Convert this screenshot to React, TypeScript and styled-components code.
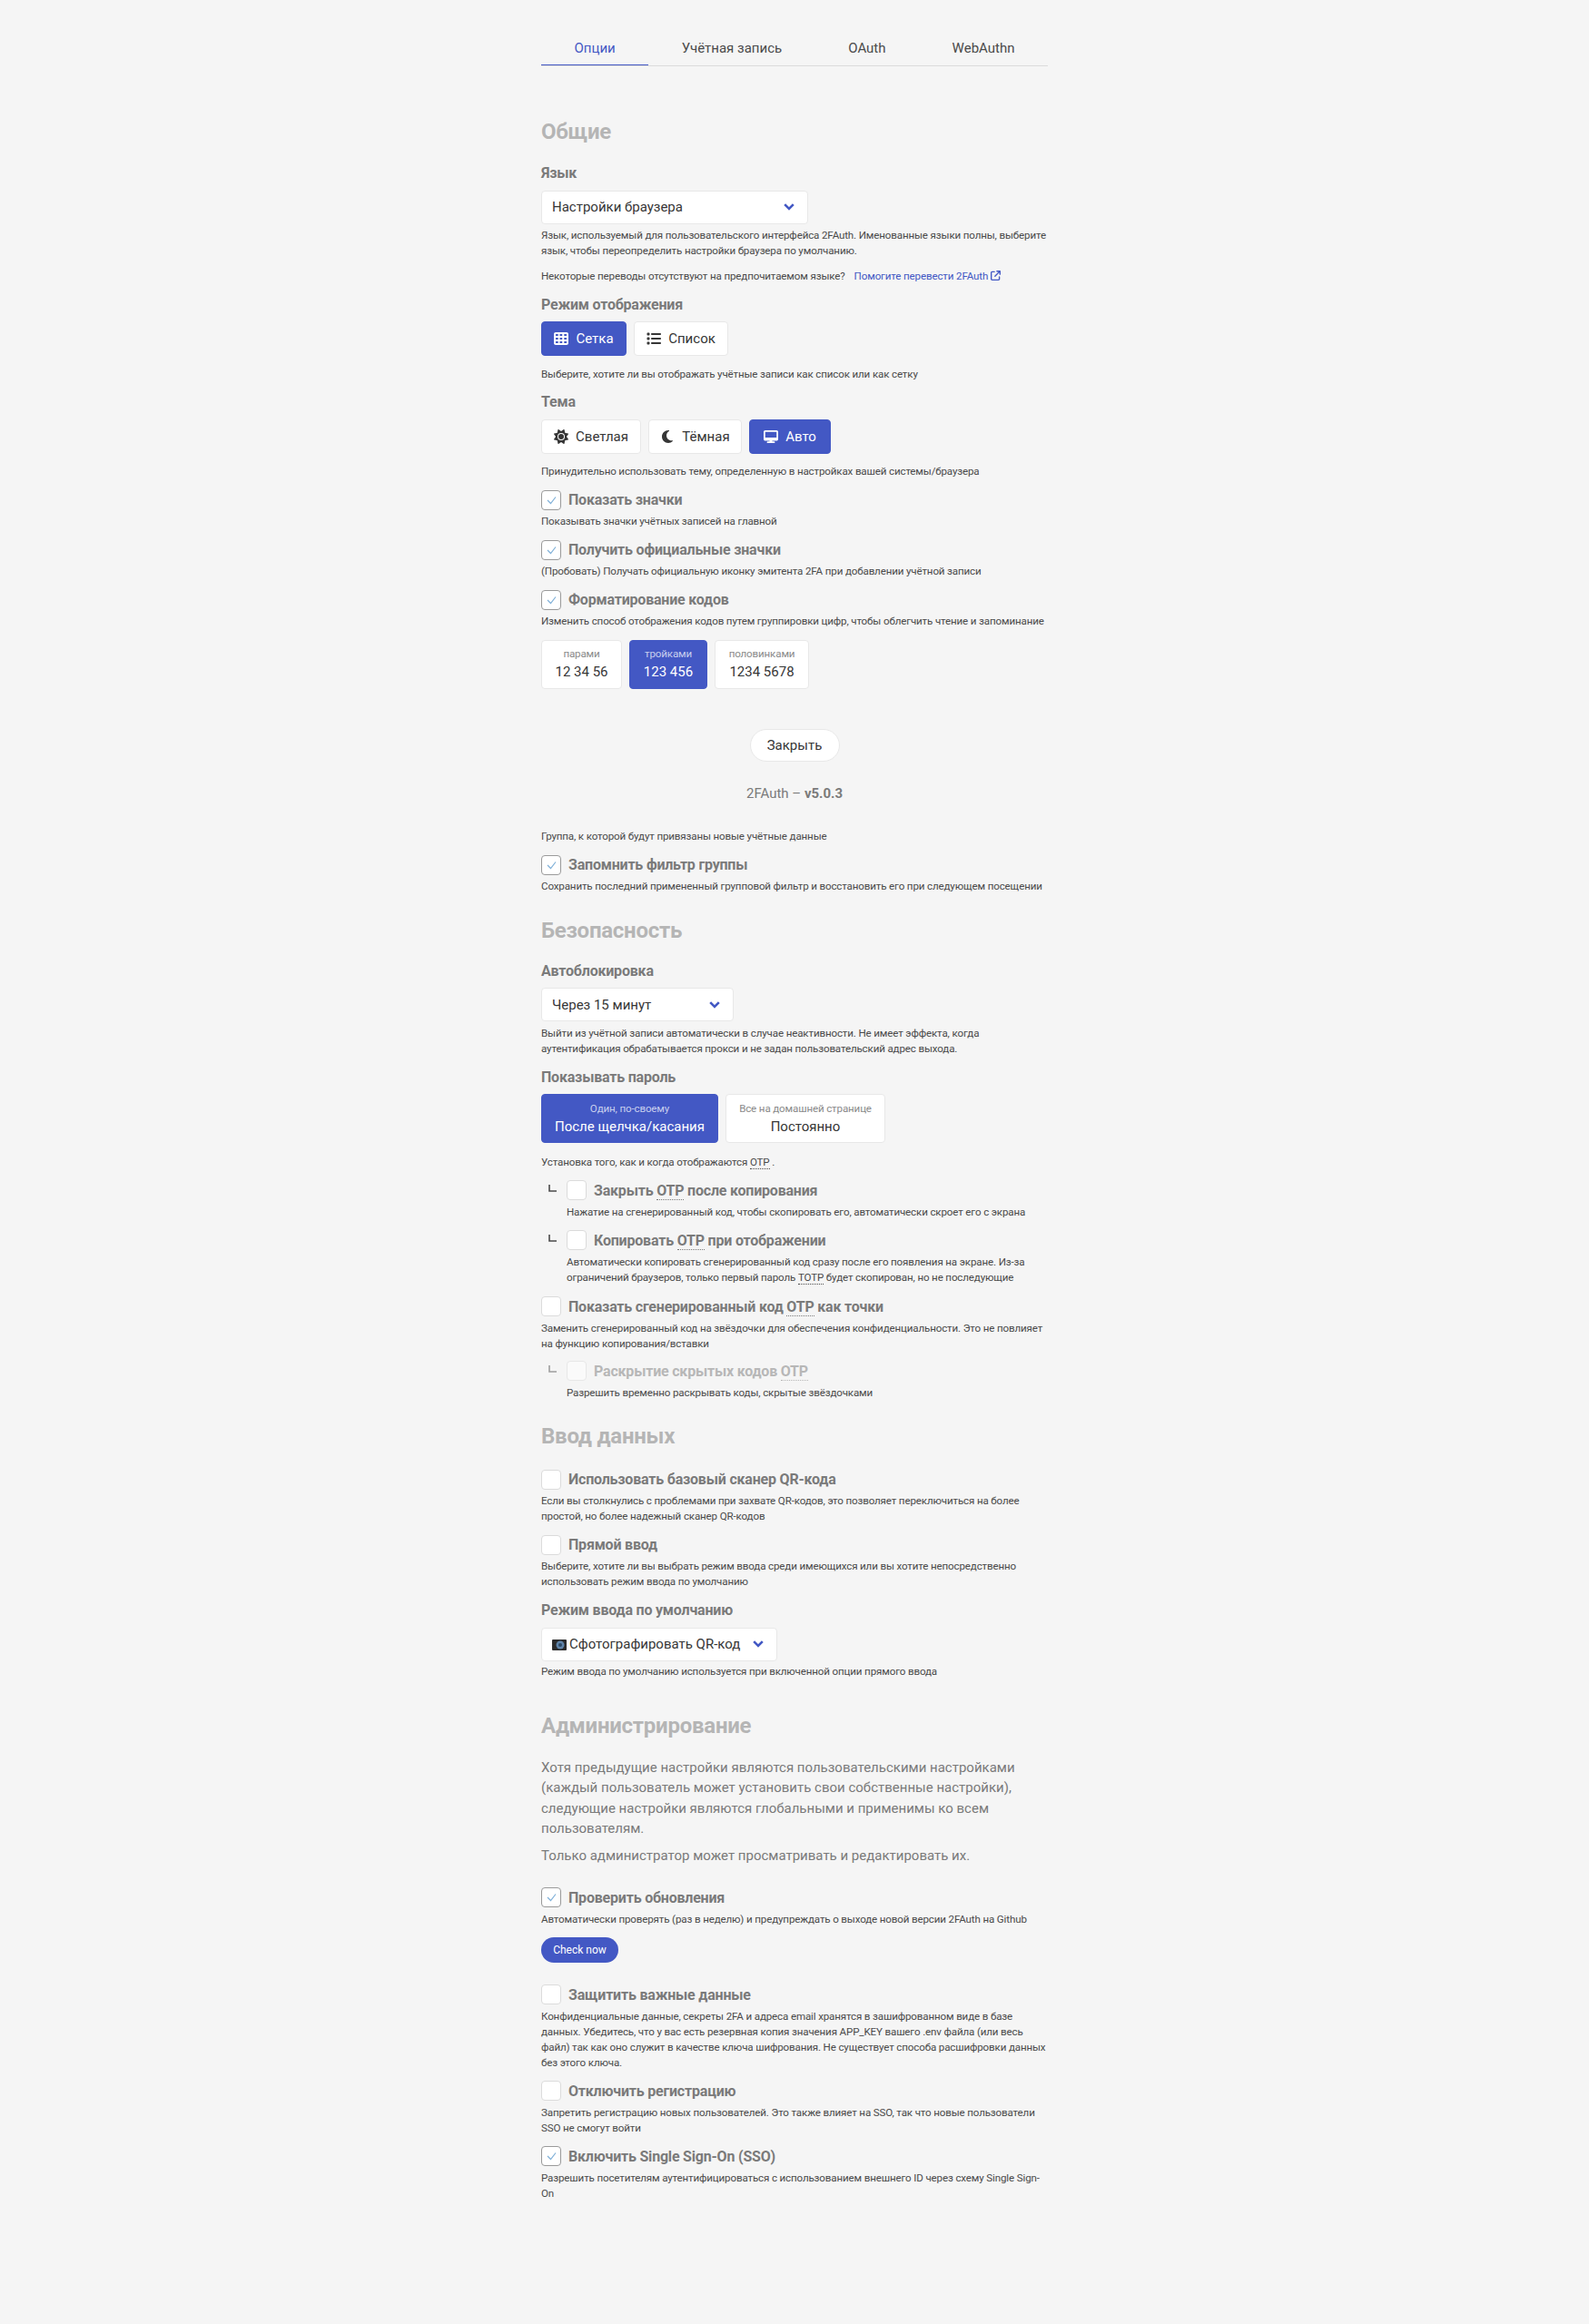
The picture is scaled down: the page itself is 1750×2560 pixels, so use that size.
import React from 'react'
import styled, { createGlobalStyle } from 'styled-components'
import { FaTableCells, FaList, FaSun, FaMoon, FaDesktop, FaArrowUpRightFromSquare } from 'react-icons/fa6'

const primary = '#4358c4'
const GlobalStyle = createGlobalStyle`
  html, body { margin: 0; background: #f5f5f5; }
  body { font-family: Roboto, sans-serif; color: #4a4a4a; }
`

const Page = styled.div`
  width: 558px;
  min-height: 2560px;
  margin: 0 auto;
  padding-top: 42px;
  box-sizing: border-box;
`

const Tabs = styled.div`
  display: flex;
  border-bottom: 1px solid #dbdbdb;
  height: 30px;
`

const Tab = styled.div<{ $active?: boolean }>`
  flex: 1 1 auto;
  text-align: center;
  font-size: 15px;
  line-height: 22px;
  color: ${(p) => (p.$active ? primary : '#4a4a4a')};
  height: 30px;
  box-sizing: border-box;
  border-bottom: ${(p) => (p.$active ? `1px solid ${primary}` : 'none')};
`

const SectionTitle = styled.h4<{ $mt?: number }>`
  margin: ${(p) => p.$mt ?? 24.5}px 0 0;
  font-size: 24px;
  line-height: 30px;
  font-weight: 700;
  letter-spacing: -0.25px;
  color: #b5b5b5;
`

const Field = styled.div<{ $mt?: number }>`
  margin-top: ${(p) => p.$mt ?? 11.5}px;
`

const Label = styled.div`
  font-size: 16px;
  line-height: 22px;
  font-weight: 700;
  letter-spacing: -0.2px;
  color: #7a7a7a;
  margin-bottom: 7.5px;
`

const Help = styled.p<{ $mt?: number; $indent?: boolean }>`
  margin: ${(p) => p.$mt ?? 4.5}px 0 0 ${(p) => (p.$indent ? 28 : 0)}px;
  font-size: 11.6px;
  letter-spacing: -0.15px;
  line-height: 17px;
  color: #4a4a4a;
`

const HelpLink = styled.span`
  color: ${primary};
  margin-left: 10px;
  svg { width: 11px; height: 11px; margin-left: 3px; vertical-align: -1px; }
`

const Abbr = styled.span`
  border-bottom: 1px dotted currentColor;
`

const SelectBox = styled.div<{ $w: number }>`
  width: ${(p) => p.$w}px;
  height: 37px;
  box-sizing: border-box;
  display: flex;
  align-items: center;
  justify-content: space-between;
  padding: 0 14px 0 11px;
  background: #fff;
  border: 1px solid #e8e8e8;
  border-radius: 4px;
  font-size: 15px;
  color: #363636;
`

const SelectValue = styled.span`
  display: flex;
  align-items: center;
  gap: 3px;
`

const ButtonRow = styled.div`
  display: flex;
  gap: 8px;
`

const ToggleButton = styled.div<{ $active?: boolean; $w: number; $h?: number }>`
  width: ${(p) => p.$w}px;
  height: ${(p) => p.$h ?? 38}px;
  box-sizing: border-box;
  display: flex;
  flex-direction: column;
  align-items: center;
  justify-content: center;
  background: ${(p) => (p.$active ? primary : '#fff')};
  border: 1px solid ${(p) => (p.$active ? primary : '#e8e8e8')};
  border-radius: 4px;
  color: ${(p) => (p.$active ? '#fff' : '#363636')};
`

const IconLine = styled.span`
  display: flex;
  align-items: center;
  gap: 8px;
  font-size: 15px;
  line-height: 22px;
  svg { width: 16px; height: 16px; }
`

const SmallCaption = styled.span<{ $active?: boolean }>`
  font-size: 11.6px;
  letter-spacing: -0.15px;
  line-height: 17px;
  color: ${(p) => (p.$active ? '#c8cfee' : '#8a8a8a')};
`

const Value = styled.span`
  font-size: 15px;
  line-height: 22px;
`

const CheckRow = styled.div<{ $mt?: number; $indent?: boolean; $disabled?: boolean }>`
  display: flex;
  align-items: center;
  margin-top: ${(p) => p.$mt ?? 11.5}px;
  height: 22px;
  position: relative;
  padding-left: ${(p) => (p.$indent ? 28 : 0)}px;
  opacity: ${(p) => (p.$disabled ? 0.5 : 1)};
`

const Box = styled.span<{ $checked?: boolean }>`
  width: 22px;
  height: 22px;
  box-sizing: border-box;
  flex: none;
  display: flex;
  align-items: center;
  justify-content: center;
  background: #fff;
  border: 1px solid ${(p) => (p.$checked ? '#9a9a9a' : '#dbdbdb')};
  border-radius: 4px;
  svg { width: 11px; height: 10px; }
`

const CheckLabel = styled.span`
  margin-left: 8px;
  font-size: 16px;
  font-weight: 700;
  letter-spacing: -0.2px;
  color: #7a7a7a;
`

const TreeMark = styled.svg`
  position: absolute;
  left: 8px;
  top: 5px;
  width: 9px;
  height: 8px;
`

const CloseRow = styled.div`
  display: flex;
  justify-content: center;
  margin-top: 44px;
`

const CloseButton = styled.div`
  width: 99px;
  height: 36px;
  box-sizing: border-box;
  display: flex;
  align-items: center;
  justify-content: center;
  background: #fff;
  border: 1px solid #e8e8e8;
  border-radius: 18px;
  font-size: 15px;
  color: #363636;
`

const Version = styled.div`
  margin-top: 24px;
  text-align: center;
  font-size: 15px;
  line-height: 22px;
  color: #7a7a7a;
  b { font-weight: 700; }
`

const Para = styled.p<{ $mt?: number }>`
  margin: ${(p) => p.$mt ?? 20}px 0 0;
  font-size: 15px;
  line-height: 22.5px;
  color: #7a7a7a;
`

const SmallPill = styled.div`
  margin-top: 11.5px;
  width: 85px;
  height: 28px;
  display: flex;
  align-items: center;
  justify-content: center;
  background: ${primary};
  border-radius: 14px;
  color: #fff;
  font-size: 12px;
`

const Chevron = () => (
  <svg width="12" height="8" viewBox="0 0 12 8">
    <path d="M1.2 1.2 L6 6 L10.8 1.2" fill="none" stroke={primary} strokeWidth="2.6" />
  </svg>
)

const CameraIcon = () => (
  <svg width="16" height="13" viewBox="0 0 16 13">
    <rect x="0" y="1" width="16" height="12" rx="1" fill="#2b2b2b" />
    <circle cx="9" cy="7" r="4.5" fill="#5f83a8" />
    <circle cx="9" cy="7" r="2" fill="#2e4a66" />
  </svg>
)

const CheckItem = ({ checked, indent, disabled, mt, children }: {
  checked?: boolean
  indent?: boolean
  disabled?: boolean
  mt?: number
  children: React.ReactNode
}) => (
  <CheckRow $indent={indent} $disabled={disabled} $mt={mt}>
    {indent && (
      <TreeMark viewBox="0 0 9 8">
        <path d="M1 0 V7 H9" fill="none" stroke="#4a4a4a" strokeWidth="1.6" />
      </TreeMark>
    )}
    <Box $checked={checked}>
      {checked && (
        <svg viewBox="0 0 11 10">
          <path d="M1 5 L4.5 8.5 L10 1.5" fill="none" stroke="#7fb0d8" strokeWidth="1.2" />
        </svg>
      )}
    </Box>
    <CheckLabel>{children}</CheckLabel>
  </CheckRow>
)

export default function App() {
  return (
    <Page>
      <GlobalStyle />
      <Tabs>
        <Tab $active>Опции</Tab>
        <Tab>Учётная запись</Tab>
        <Tab>OAuth</Tab>
        <Tab>WebAuthn</Tab>
      </Tabs>

      <SectionTitle $mt={57}>Общие</SectionTitle>
      <Field $mt={20}>
        <Label>Язык</Label>
        <SelectBox $w={294}>
          <span>Настройки браузера</span>
          <Chevron />
        </SelectBox>
        <Help>
          Язык, используемый для пользовательского интерфейса 2FAuth. Именованные языки полны, выберите
          язык, чтобы переопределить настройки браузера по умолчанию.
        </Help>
      </Field>
      <Help $mt={11}>
        Некоторые переводы отсутствуют на предпочитаемом языке?
        <HelpLink>
          Помогите перевести 2FAuth
          <FaArrowUpRightFromSquare />
        </HelpLink>
      </Help>
      <Field>
        <Label>Режим отображения</Label>
        <ButtonRow>
          <ToggleButton $active $w={94}>
            <IconLine><FaTableCells />Сетка</IconLine>
          </ToggleButton>
          <ToggleButton $w={104}>
            <IconLine><FaList />Список</IconLine>
          </ToggleButton>
        </ButtonRow>
        <Help $mt={11.5}>Выберите, хотите ли вы отображать учётные записи как список или как сетку</Help>
      </Field>
      <Field>
        <Label>Тема</Label>
        <ButtonRow>
          <ToggleButton $w={110}>
            <IconLine><FaSun />Светлая</IconLine>
          </ToggleButton>
          <ToggleButton $w={103}>
            <IconLine><FaMoon />Тёмная</IconLine>
          </ToggleButton>
          <ToggleButton $active $w={90}>
            <IconLine><FaDesktop />Авто</IconLine>
          </ToggleButton>
        </ButtonRow>
        <Help $mt={11.5}>Принудительно использовать тему, определенную в настройках вашей системы/браузера</Help>
      </Field>
      <CheckItem checked>Показать значки</CheckItem>
      <Help>Показывать значки учётных записей на главной</Help>
      <CheckItem checked>Получить официальные значки</CheckItem>
      <Help>(Пробовать) Получать официальную иконку эмитента 2FA при добавлении учётной записи</Help>
      <CheckItem checked>Форматирование кодов</CheckItem>
      <Help>Изменить способ отображения кодов путем группировки цифр, чтобы облегчить чтение и запоминание</Help>
      <Field $mt={11.5}>
        <ButtonRow>
          <ToggleButton $w={89} $h={54}>
            <SmallCaption>парами</SmallCaption>
            <Value>12 34 56</Value>
          </ToggleButton>
          <ToggleButton $active $w={86} $h={54}>
            <SmallCaption $active>тройками</SmallCaption>
            <Value>123 456</Value>
          </ToggleButton>
          <ToggleButton $w={104} $h={54}>
            <SmallCaption>половинками</SmallCaption>
            <Value>1234 5678</Value>
          </ToggleButton>
        </ButtonRow>
      </Field>

      <CloseRow>
        <CloseButton>Закрыть</CloseButton>
      </CloseRow>
      <Version>2FAuth – <b>v5.0.3</b></Version>

      <Help $mt={28.5}>Группа, к которой будут привязаны новые учётные данные</Help>
      <CheckItem checked>Запомнить фильтр группы</CheckItem>
      <Help>Сохранить последний примененный групповой фильтр и восстановить его при следующем посещении</Help>

      <SectionTitle>Безопасность</SectionTitle>
      <Field $mt={19}>
        <Label>Автоблокировка</Label>
        <SelectBox $w={212}>
          <span>Через 15 минут</span>
          <Chevron />
        </SelectBox>
        <Help $mt={5}>
          Выйти из учётной записи автоматически в случае неактивности. Не имеет эффекта, когда
          аутентификация обрабатывается прокси и не задан пользовательский адрес выхода.
        </Help>
      </Field>
      <Field>
        <Label>Показывать пароль</Label>
        <ButtonRow>
          <ToggleButton $active $w={195} $h={54}>
            <SmallCaption $active>Один, по-своему</SmallCaption>
            <Value>После щелчка/касания</Value>
          </ToggleButton>
          <ToggleButton $w={176} $h={54}>
            <SmallCaption>Все на домашней странице</SmallCaption>
            <Value>Постоянно</Value>
          </ToggleButton>
        </ButtonRow>
        <Help $mt={12.5}>Установка того, как и когда отображаются <Abbr>OTP</Abbr> .</Help>
      </Field>
      <CheckItem indent>Закрыть <Abbr>OTP</Abbr> после копирования</CheckItem>
      <Help $indent>Нажатие на сгенерированный код, чтобы скопировать его, автоматически скроет его с экрана</Help>
      <CheckItem indent>Копировать <Abbr>OTP</Abbr> при отображении</CheckItem>
      <Help $indent>
        Автоматически копировать сгенерированный код сразу после его появления на экране. Из-за
        ограничений браузеров, только первый пароль <Abbr>TOTP</Abbr> будет скопирован, но не последующие
      </Help>
      <CheckItem mt={12.5}>Показать сгенерированный код <Abbr>OTP</Abbr> как точки</CheckItem>
      <Help>
        Заменить сгенерированный код на звёздочки для обеспечения конфиденциальности. Это не повлияет
        на функцию копирования/вставки
      </Help>
      <CheckItem indent disabled mt={10.5}>Раскрытие скрытых кодов <Abbr>OTP</Abbr></CheckItem>
      <Help $indent>Разрешить временно раскрывать коды, скрытые звёздочками</Help>

      <SectionTitle>Ввод данных</SectionTitle>
      <CheckItem mt={21.5}>Использовать базовый сканер QR-кода</CheckItem>
      <Help>
        Если вы столкнулись с проблемами при захвате QR-кодов, это позволяет переключиться на более
        простой, но более надежный сканер QR-кодов
      </Help>
      <CheckItem>Прямой ввод</CheckItem>
      <Help>
        Выберите, хотите ли вы выбрать режим ввода среди имеющихся или вы хотите непосредственно
        использовать режим ввода по умолчанию
      </Help>
      <Field $mt={12}>
        <Label>Режим ввода по умолчанию</Label>
        <SelectBox $w={260}>
          <SelectValue><CameraIcon />Сфотографировать QR-код</SelectValue>
          <Chevron />
        </SelectBox>
        <Help $mt={3.5}>Режим ввода по умолчанию используется при включенной опции прямого ввода</Help>
      </Field>

      <SectionTitle $mt={35.5}>Администрирование</SectionTitle>
      <Para>
        Хотя предыдущие настройки являются пользовательскими настройками (каждый пользователь может
        установить свои собственные настройки), следующие настройки являются глобальными и применимы
        ко всем пользователям.
      </Para>
      <Para $mt={7}>Только администратор может просматривать и редактировать их.</Para>

      <CheckItem checked mt={24}>Проверить обновления</CheckItem>
      <Help>Автоматически проверять (раз в неделю) и предупреждать о выходе новой версии 2FAuth на Github</Help>
      <SmallPill>Check now</SmallPill>
      <CheckItem mt={24}>Защитить важные данные</CheckItem>
      <Help>
        Конфиденциальные данные, секреты 2FA и адреса email хранятся в зашифрованном виде в базе
        данных. Убедитесь, что у вас есть резервная копия значения APP_KEY вашего .env файла (или весь
        файл) так как оно служит в качестве ключа шифрования. Не существует способа расшифровки данных
        без этого ключа.
      </Help>
      <CheckItem>Отключить регистрацию</CheckItem>
      <Help>
        Запретить регистрацию новых пользователей. Это также влияет на SSO, так что новые пользователи
        SSO не смогут войти
      </Help>
      <CheckItem checked>Включить Single Sign-On (SSO)</CheckItem>
      <Help>
        Разрешить посетителям аутентифицироваться с использованием внешнего ID через схему Single Sign-On
      </Help>
    </Page>
  )
}
